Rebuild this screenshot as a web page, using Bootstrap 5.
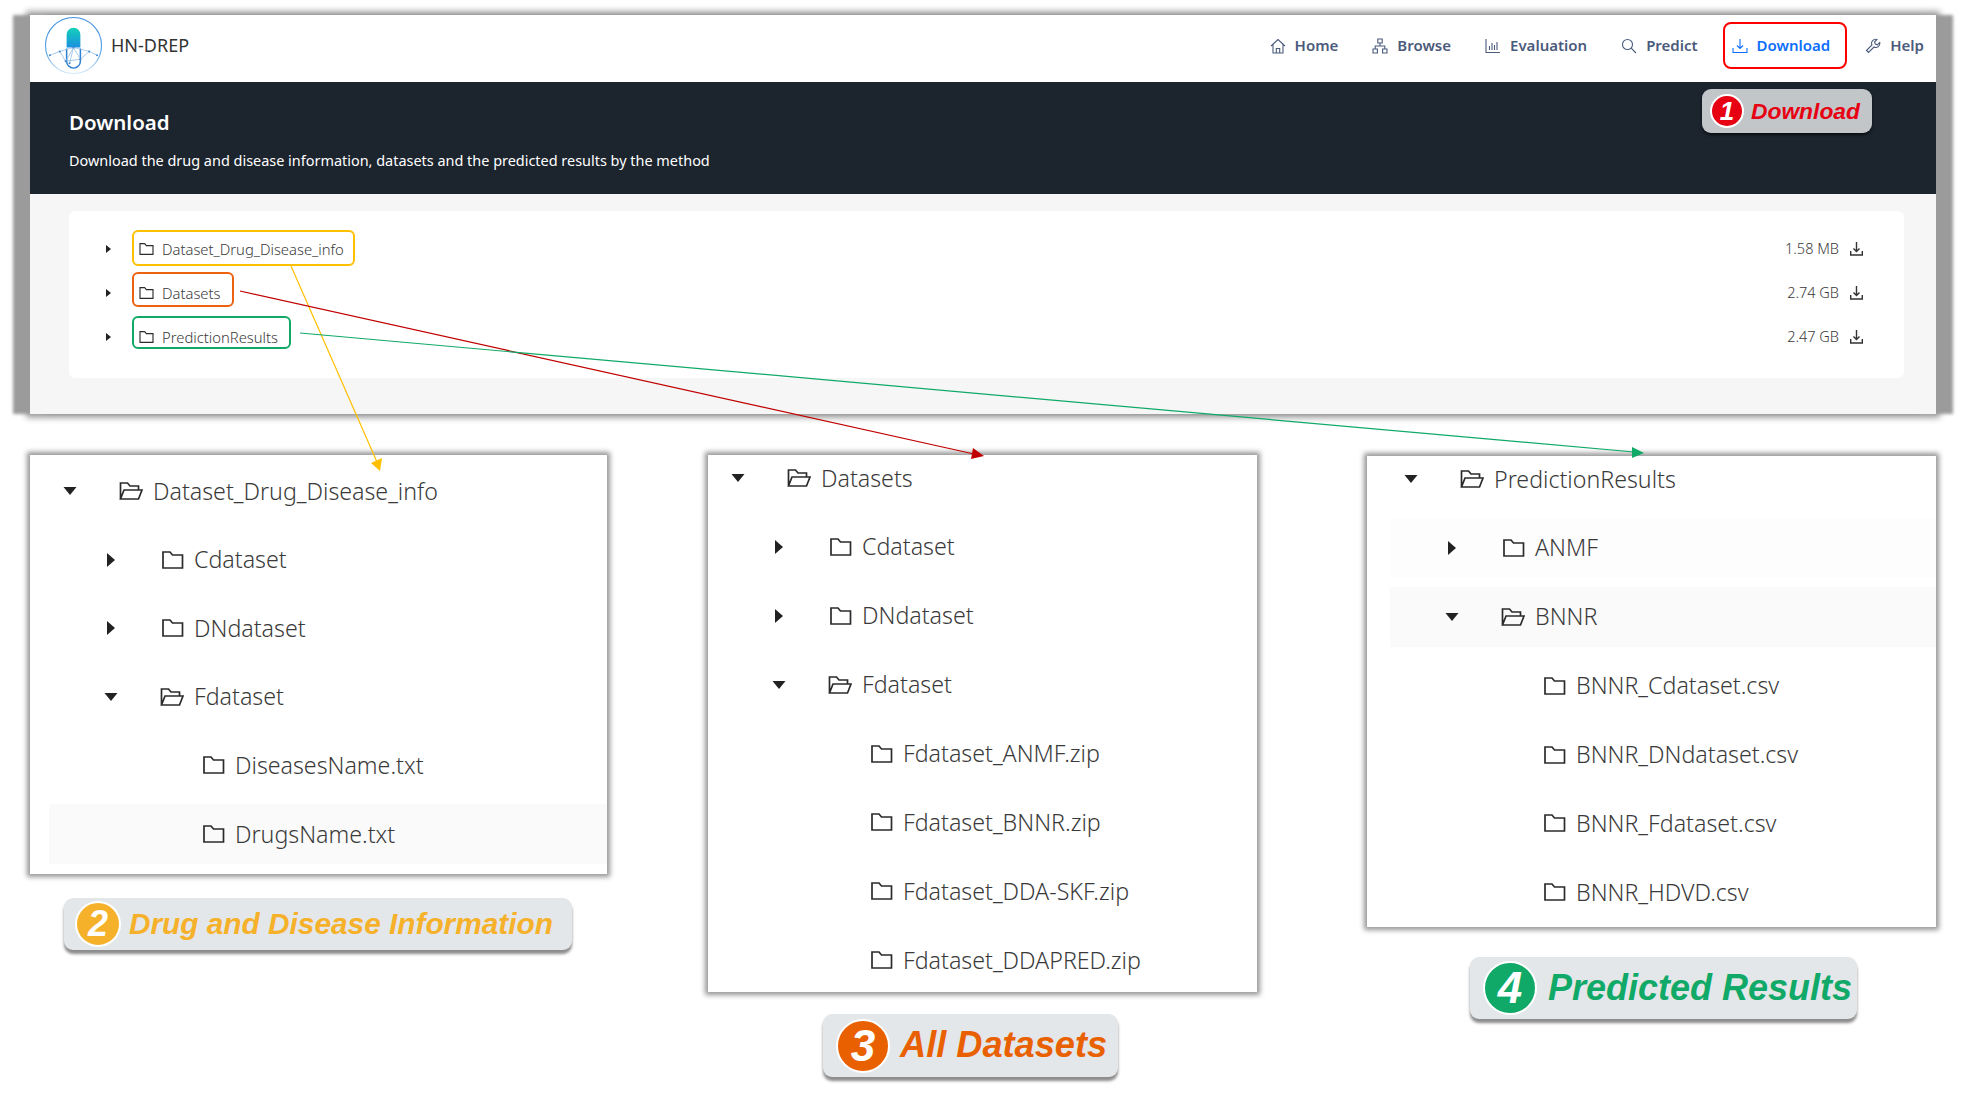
<!DOCTYPE html>
<html lang="en">
<head>
    <meta charset="utf-8">
    <title>HN-DREP - Download</title>
    <link href="https://cdn.jsdelivr.net/npm/bootstrap@5.3.3/dist/css/bootstrap.min.css" rel="stylesheet">
    <style>
        body {
            background: #fff;
            font-family: "Noto Sans", "Open Sans", sans-serif;
            color: #3a3a3a;
        }
        .stage {
            position: relative;
            width: 1966px;
            height: 1094px;
            overflow: hidden;
        }

        /* top window */
        .site-window {
            width: 1906px;
            height: 399px;
            margin: 15px 0 0 30px;
            background: #f6f6f6;
            box-shadow: -17px 0 3px #9b9b9b, 17px 0 3px #9b9b9b, 0 0 6px 4px #a5a5a5;
        }
        .site-nav {
            height: 67px;
            padding: 0 0 6px 14px;
            background: #fff;
        }
        .brand-name {
            margin-left: 8px;
            font-size: 18px;
            color: #333;
        }
        .site-link {
            gap: 9px;
            padding: 0 17px;
            font-size: 15px;
            font-weight: 600;
            color: #4b5b7c;
            text-decoration: none;
        }
        .site-link:last-child { padding-right: 12px; }
        .site-link svg {
            width: 16px;
            height: 16px;
            fill: none;
            stroke: currentColor;
            stroke-width: 1.1;
        }
        .site-link.is-current {
            height: 47px;
            margin: 0 1px 0 8px;
            padding: 0 15px 0 7px;
            border: 2px solid #f00;
            border-radius: 8px;
            color: #0d6efd;
        }
        .page-hero {
            height: 112px;
            padding: 24px 0 0 39px;
            background: #1c242e;
            color: #fff;
        }
        .page-hero h1 {
            margin: 0 0 12px;
            font-size: 20.5px;
            font-weight: 600;
            line-height: 32px;
        }
        .page-hero p {
            margin: 0;
            font-size: 14.45px;
            line-height: 22px;
        }
        .tree-card {
            height: 167px;
            margin: 17px 32px 0 39px;
            padding: 16px 41px 0 34px;
            background: #fff;
            border-radius: 6px;
        }
        .top-row {
            height: 44px;
            font-size: 14.8px;
            font-weight: 300;
        }
        .top-caret {
            width: 10px;
            height: 10px;
            margin-right: 19px;
            fill: #222;
        }
        .name-box {
            height: 35px;
            padding: 0 11px 0 4px;
            border: 2px solid;
            border-radius: 6px;
        }
        .name-box svg {
            width: 16px;
            height: 14px;
            margin-right: 8px;
        }
        /* the boxes sit a little above their rows, the labels stay centred */
        .box-yellow { height: 36px; margin-bottom: 2px; padding-top: 2px; padding-right: 9px; border-color: #ffc000; }
        .box-orange { margin-bottom: 7px; padding-top: 7px; border-color: #ed6210; }
        .box-green { height: 33px; margin-bottom: 9px; padding-top: 9px; border-color: #10a968; }
        .size-text { margin-right: 11px; font-size: 14.5px; }
        .fetch-icon {
            width: 13px;
            height: 14px;
            fill: none;
            stroke: #333;
            stroke-width: 1.4;
        }

        /* cropped trees */
        .crop-row {
            margin-top: 41px;
        }
        .crop-col-a { width: 577px; margin-left: 30px; }
        .crop-col-b { width: 549px; margin-left: 101px; }
        .crop-col-c { width: 569px; margin-left: 110px; padding-top: 1px; }
        .crop-panel {
            overflow: hidden;
            background: #fff;
            box-shadow: 0 0 5px 3px #969696;
        }
        .crop-col-a .crop-panel { height: 419px; padding: 6px 0 0 19px; }
        .crop-col-b .crop-panel { height: 537px; padding-left: 9px; }
        .crop-col-b .tree-list { margin-top: -7px; }
        .crop-col-c .crop-panel { height: 471px; padding-left: 23px; }
        .crop-col-c .tree-list { margin-top: -7px; }
        .tree-row {
            height: 60px;
            margin-bottom: 8.9px;
            font-size: 23.2px;
            font-weight: 300;
        }
        .crop-col-a .tree-row { margin-bottom: 8.6px; }
        .lvl-2 { padding-left: 41px; }
        .lvl-3 { padding-left: 82px; }
        .tree-row.row-soft { background: #fdfdfd; }
        .tree-row.row-hover { background: #fafafa; }
        .caret-mark {
            flex: none;
            width: 42px;
            height: 14px;
            margin-right: 28px;
            fill: #222;
        }
        .folder-mark {
            flex: none;
            width: 24px;
            height: 20px;
            margin-right: 10px;
            fill: none;
            stroke: #2b2b2b;
            stroke-width: 1.7;
        }
        .lvl-3 .caret-mark { visibility: hidden; }

        /* captions */
        .caption-tag {
            font-family: "Liberation Sans", Arial, sans-serif;
            font-style: italic;
            font-weight: 700;
            white-space: nowrap;
            background: #e4e7e9;
            border-radius: 9px;
            box-shadow: 0 4px 3px #8c8c8c;
        }
        .caption-num {
            flex: none;
            color: #fff;
            border: 2px solid #fff;
            border-radius: 50%;
        }
        .tag-one {
            position: absolute;
            top: 89px;
            left: 1702px;
            width: 170px;
            height: 44px;
            padding-left: 8px;
            gap: 7px;
            font-size: 22.8px;
            color: #e60012;
            background: #c3c6c9;
            box-shadow: 0 2px 3px #0b0f14;
        }
        .tag-one .caption-num { width: 34px; height: 34px; font-size: 26px; background: #e60012; }
        .tag-two {
            width: 508px;
            height: 52px;
            margin: 24px 0 0 34px;
            padding-left: 11px;
            gap: 8px;
            font-size: 29.8px;
            color: #f6b12b;
        }
        .tag-two .caption-num { width: 46px; height: 46px; font-size: 36px; background: #f6b12b; }
        .tag-three {
            width: 295px;
            height: 63px;
            margin: 22px 0 0 115px;
            padding-left: 13px;
            gap: 10px;
            font-size: 36.2px;
            color: #e96000;
        }
        .tag-three .caption-num { width: 54px; height: 54px; font-size: 44px; background: #e96000; }
        .tag-four {
            width: 387px;
            height: 62px;
            margin: 30px 0 0 103px;
            padding-left: 13px;
            gap: 11px;
            font-size: 36px;
            color: #10a968;
        }
        .tag-four .caption-num { width: 54px; height: 54px; font-size: 44px; background: #10a968; }

        .link-lines {
            position: absolute;
            top: 0;
            left: 0;
            pointer-events: none;
        }
    </style>
</head>
<body>

<svg width="0" height="0" class="position-absolute">
    <symbol id="caret-small" viewBox="0 0 10 10"><path d="M3 1l5 4-5 4z"/></symbol>
    <symbol id="caret-right" viewBox="0 0 42 14"><path d="M17 0l8 7-8 7z"/></symbol>
    <symbol id="caret-down" viewBox="0 0 42 14"><path d="M14.500 3h13l-6.500 8z"/></symbol>
    <symbol id="folder-closed" viewBox="0 0 24 20"><path d="M3 2h7l2.500 3H22.500v13H3z"/></symbol>
    <symbol id="folder-open" viewBox="0 0 24 20"><path d="M1.500 18V2h7l2.500 3h8.500v4M1.500 18l3.500-9h18l-3.500 9z"/></symbol>
    <symbol id="fetch" viewBox="0 0 13 14"><path d="M6.500 0v9M3.500 6.500l3 3 3-3M.7 9v4h11.600V9"/></symbol>
</svg>

<div class="stage">
    <div class="site-window d-flex flex-column">
        <nav class="site-nav d-flex align-items-center">
            <a class="d-flex align-items-center text-decoration-none" href="#">
                <svg width="59" height="59" viewBox="0 0 60 60">
                    <defs>
                        <linearGradient id="ring" x1="0" y1="0" x2="0" y2="1">
                            <stop offset="0" stop-color="#3f8fe0"/>
                            <stop offset=".65" stop-color="#62a8e8"/>
                            <stop offset="1" stop-color="#d5e8f8"/>
                        </linearGradient>
                        <linearGradient id="pill" x1="0" y1="0" x2="0" y2="1">
                            <stop offset="0" stop-color="#14d0b8"/>
                            <stop offset="1" stop-color="#1a90e0"/>
                        </linearGradient>
                    </defs>
                    <circle cx="30" cy="30" r="28.500" fill="#fff" stroke="url(#ring)" stroke-width="1.200"/>
                    <path d="M23 32V19a7 7 0 0 1 14 0v13z" fill="url(#pill)"/>
                    <path d="M23 33v13a7 7 0 0 0 14 0V33" fill="none" stroke="#2b7fd0" stroke-width="1.500"/>
                    <g fill="none" stroke="#7fb2e2" stroke-width=".7">
                        <path d="M6 40l10-4 6 10 8-14 7 12 9-8 8 4M16 36l14-4 16 4M22 46l15-2M30 32l-4 16"/>
                    </g>
                    <g fill="#3f86cc">
                        <circle cx="6" cy="40" r="1"/><circle cx="16" cy="36" r="1"/><circle cx="22" cy="46" r="1"/>
                        <circle cx="30" cy="32" r="1"/><circle cx="37" cy="44" r="1"/><circle cx="46" cy="36" r="1"/>
                        <circle cx="54" cy="40" r="1"/><circle cx="26" cy="48" r="1"/>
                    </g>
                </svg>
                <span class="brand-name">HN-DREP</span>
            </a>
            <div class="d-flex align-items-center ms-auto">
                <a class="site-link d-flex align-items-center" href="#">
                    <svg viewBox="0 0 16 16"><path d="M1 8l7-6.500L15 8M3 6.500V15h10V6.500M6.300 15v-4.500h3.400V15"/></svg>Home
                </a>
                <a class="site-link d-flex align-items-center" href="#">
                    <svg viewBox="0 0 16 16"><path d="M5.800 1h4.400v4H5.800zM1 11h4.400v4H1zM10.600 11H15v4h-4.400zM8 5v3M3.200 11V8h9.600v3"/></svg>Browse
                </a>
                <a class="site-link d-flex align-items-center" href="#">
                    <svg viewBox="0 0 16 16"><path d="M1 1v13.500h14M4.500 12V8M7 12V5M9.500 12V7M12 12V4"/></svg>Evaluation
                </a>
                <a class="site-link d-flex align-items-center" href="#">
                    <svg viewBox="0 0 16 16"><circle cx="6.500" cy="6.500" r="5"/><path d="M10.200 10.200L15 15"/></svg>Predict
                </a>
                <a class="site-link is-current d-flex align-items-center" href="#">
                    <svg viewBox="0 0 16 16"><path d="M8 1v9.500M5 7.500l3 3 3-3M1 10v4.500h14V10"/></svg>Download
                </a>
                <a class="site-link d-flex align-items-center" href="#">
                    <svg viewBox="0 0 16 16"><path d="M1.500 12.500L7 7a4 4 0 0 1 5-5.500L9.500 4l.8 2 2 .8L14.700 4.500A4 4 0 0 1 9 9l-5.500 5.500z"/></svg>Help
                </a>
            </div>
        </nav>

        <header class="page-hero">
            <h1>Download</h1>
            <p>Download the drug and disease information, datasets and the predicted results by the method</p>
        </header>

        <div class="tree-card">
            <div class="top-row d-flex align-items-center">
                <svg class="top-caret"><use href="#caret-small"/></svg>
                <span class="name-box box-yellow d-flex align-items-center">
                    <svg class="folder-mark"><use href="#folder-closed"/></svg>Dataset_Drug_Disease_info
                </span>
                <span class="size-text ms-auto">1.58 MB</span>
                <svg class="fetch-icon"><use href="#fetch"/></svg>
            </div>
            <div class="top-row d-flex align-items-center">
                <svg class="top-caret"><use href="#caret-small"/></svg>
                <span class="name-box box-orange d-flex align-items-center">
                    <svg class="folder-mark"><use href="#folder-closed"/></svg>Datasets
                </span>
                <span class="size-text ms-auto">2.74 GB</span>
                <svg class="fetch-icon"><use href="#fetch"/></svg>
            </div>
            <div class="top-row d-flex align-items-center">
                <svg class="top-caret"><use href="#caret-small"/></svg>
                <span class="name-box box-green d-flex align-items-center">
                    <svg class="folder-mark"><use href="#folder-closed"/></svg>PredictionResults
                </span>
                <span class="size-text ms-auto">2.47 GB</span>
                <svg class="fetch-icon"><use href="#fetch"/></svg>
            </div>
        </div>
    </div>

    <div class="caption-tag tag-one d-flex align-items-center">
        <span class="caption-num d-flex align-items-center justify-content-center">1</span>Download
    </div>

    <div class="crop-row d-flex align-items-start">
        <div class="crop-col-a">
            <div class="crop-panel">
                <div class="tree-list">
                    <div class="tree-row d-flex align-items-center"><svg class="caret-mark"><use href="#caret-down"/></svg><svg class="folder-mark"><use href="#folder-open"/></svg>Dataset_Drug_Disease_info</div>
                    <div class="tree-row lvl-2 d-flex align-items-center"><svg class="caret-mark"><use href="#caret-right"/></svg><svg class="folder-mark"><use href="#folder-closed"/></svg>Cdataset</div>
                    <div class="tree-row lvl-2 d-flex align-items-center"><svg class="caret-mark"><use href="#caret-right"/></svg><svg class="folder-mark"><use href="#folder-closed"/></svg>DNdataset</div>
                    <div class="tree-row lvl-2 d-flex align-items-center"><svg class="caret-mark"><use href="#caret-down"/></svg><svg class="folder-mark"><use href="#folder-open"/></svg>Fdataset</div>
                    <div class="tree-row lvl-3 d-flex align-items-center"><svg class="caret-mark"><use href="#caret-right"/></svg><svg class="folder-mark"><use href="#folder-closed"/></svg>DiseasesName.txt</div>
                    <div class="tree-row lvl-3 row-hover d-flex align-items-center"><svg class="caret-mark"><use href="#caret-right"/></svg><svg class="folder-mark"><use href="#folder-closed"/></svg>DrugsName.txt</div>
                </div>
            </div>
            <div class="caption-tag tag-two d-flex align-items-center">
                <span class="caption-num d-flex align-items-center justify-content-center">2</span>Drug and Disease Information
            </div>
        </div>

        <div class="crop-col-b">
            <div class="crop-panel">
                <div class="tree-list">
                    <div class="tree-row d-flex align-items-center"><svg class="caret-mark"><use href="#caret-down"/></svg><svg class="folder-mark"><use href="#folder-open"/></svg>Datasets</div>
                    <div class="tree-row lvl-2 d-flex align-items-center"><svg class="caret-mark"><use href="#caret-right"/></svg><svg class="folder-mark"><use href="#folder-closed"/></svg>Cdataset</div>
                    <div class="tree-row lvl-2 d-flex align-items-center"><svg class="caret-mark"><use href="#caret-right"/></svg><svg class="folder-mark"><use href="#folder-closed"/></svg>DNdataset</div>
                    <div class="tree-row lvl-2 d-flex align-items-center"><svg class="caret-mark"><use href="#caret-down"/></svg><svg class="folder-mark"><use href="#folder-open"/></svg>Fdataset</div>
                    <div class="tree-row lvl-3 d-flex align-items-center"><svg class="caret-mark"><use href="#caret-right"/></svg><svg class="folder-mark"><use href="#folder-closed"/></svg>Fdataset_ANMF.zip</div>
                    <div class="tree-row lvl-3 d-flex align-items-center"><svg class="caret-mark"><use href="#caret-right"/></svg><svg class="folder-mark"><use href="#folder-closed"/></svg>Fdataset_BNNR.zip</div>
                    <div class="tree-row lvl-3 d-flex align-items-center"><svg class="caret-mark"><use href="#caret-right"/></svg><svg class="folder-mark"><use href="#folder-closed"/></svg>Fdataset_DDA-SKF.zip</div>
                    <div class="tree-row lvl-3 d-flex align-items-center"><svg class="caret-mark"><use href="#caret-right"/></svg><svg class="folder-mark"><use href="#folder-closed"/></svg>Fdataset_DDAPRED.zip</div>
                </div>
            </div>
            <div class="caption-tag tag-three d-flex align-items-center">
                <span class="caption-num d-flex align-items-center justify-content-center">3</span>All Datasets
            </div>
        </div>

        <div class="crop-col-c">
            <div class="crop-panel">
                <div class="tree-list">
                    <div class="tree-row d-flex align-items-center"><svg class="caret-mark"><use href="#caret-down"/></svg><svg class="folder-mark"><use href="#folder-open"/></svg>PredictionResults</div>
                    <div class="tree-row row-soft lvl-2 d-flex align-items-center"><svg class="caret-mark"><use href="#caret-right"/></svg><svg class="folder-mark"><use href="#folder-closed"/></svg>ANMF</div>
                    <div class="tree-row row-hover lvl-2 d-flex align-items-center"><svg class="caret-mark"><use href="#caret-down"/></svg><svg class="folder-mark"><use href="#folder-open"/></svg>BNNR</div>
                    <div class="tree-row lvl-3 d-flex align-items-center"><svg class="caret-mark"><use href="#caret-right"/></svg><svg class="folder-mark"><use href="#folder-closed"/></svg>BNNR_Cdataset.csv</div>
                    <div class="tree-row lvl-3 d-flex align-items-center"><svg class="caret-mark"><use href="#caret-right"/></svg><svg class="folder-mark"><use href="#folder-closed"/></svg>BNNR_DNdataset.csv</div>
                    <div class="tree-row lvl-3 d-flex align-items-center"><svg class="caret-mark"><use href="#caret-right"/></svg><svg class="folder-mark"><use href="#folder-closed"/></svg>BNNR_Fdataset.csv</div>
                    <div class="tree-row lvl-3 d-flex align-items-center"><svg class="caret-mark"><use href="#caret-right"/></svg><svg class="folder-mark"><use href="#folder-closed"/></svg>BNNR_HDVD.csv</div>
                </div>
            </div>
            <div class="caption-tag tag-four d-flex align-items-center">
                <span class="caption-num d-flex align-items-center justify-content-center">4</span>Predicted Results
            </div>
        </div>
    </div>

    <!-- arrows from the top tree down to the crops -->
    <svg class="link-lines" width="1966" height="1094">
        <line x1="291" y1="266" x2="377" y2="462" stroke="#ffc000" stroke-width="1.200"/>
        <polygon points="380,471 371,463 382,458" fill="#ffc000"/>
        <line x1="240" y1="291" x2="974" y2="454" stroke="#c00000" stroke-width="1.200"/>
        <polygon points="984,456 971,459 973,448" fill="#c00000"/>
        <line x1="300" y1="333" x2="1634" y2="452" stroke="#10a968" stroke-width="1.200"/>
        <polygon points="1644,453 1632,458 1632,447" fill="#10a968"/>
    </svg>
</div>

<script src="https://cdn.jsdelivr.net/npm/bootstrap@5.3.3/dist/js/bootstrap.bundle.min.js"></script>

</body>
</html>
